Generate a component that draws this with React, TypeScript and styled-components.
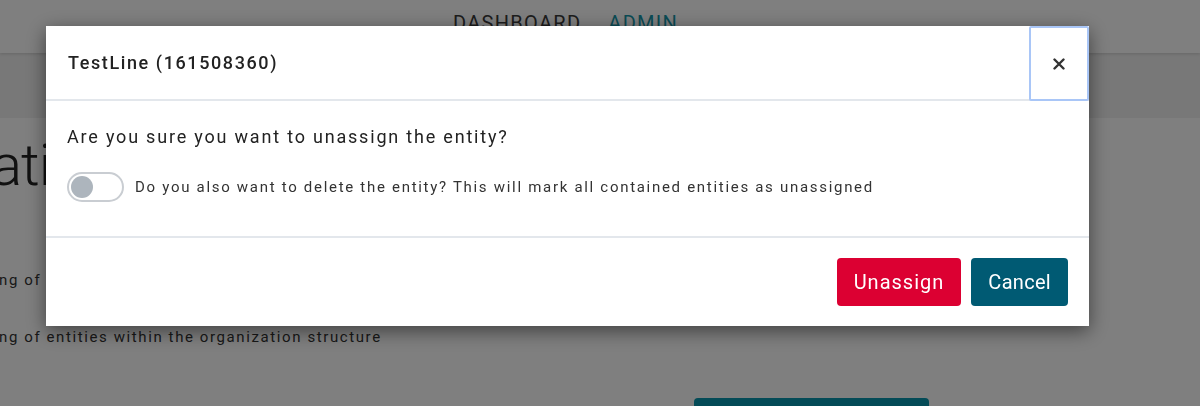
import styled, { createGlobalStyle } from "styled-components";

const GlobalStyle = createGlobalStyle`
  html, body {
    margin: 0;
    padding: 0;
    background: #fff;
    overflow: hidden;
    font-family: Roboto, "Liberation Sans", sans-serif;
  }
  * {
    box-sizing: border-box;
  }
`;

const Page = styled.div`
  width: 1200px;
  height: 406px;
  display: flex;
  flex-direction: column;
  overflow: hidden;
`;

const Header = styled.header`
  height: 53px;
  flex-shrink: 0;
  display: flex;
  align-items: center;
  padding-left: 453px;
  gap: 27px;
  background: #fff;
  box-shadow: 0 1px 3px rgba(0, 0, 0, 0.15);
  position: relative;
  z-index: 1;
`;

const NavLink = styled.a<{ $active?: boolean }>`
  font-size: 20px;
  letter-spacing: 1.3px;
  text-transform: uppercase;
  color: ${(p) => (p.$active ? "#1597aa" : "#3a3a3a")};
  text-decoration: none;
  margin-top: -7px;
`;

const SubBar = styled.div`
  height: 65px;
  flex-shrink: 0;
  background: #f0f0f0;
`;

const Content = styled.main`
  display: flex;
  flex-direction: column;
  flex-shrink: 0;
  padding-top: 18px;
`;

const PageTitle = styled.h1`
  margin: 0 0 0 -9px;
  font-size: 58px;
  font-weight: 300;
  line-height: 58px;
  letter-spacing: -1px;
  color: #222;
`;

const Description = styled.p`
  margin: 0 0 0 -1px;
  font-size: 15px;
  letter-spacing: 1.6px;
  color: #333;
  line-height: 20px;
`;

const Descriptions = styled.div`
  display: flex;
  flex-direction: column;
  gap: 37px;
  margin-top: 76px;
`;

const PrimaryButton = styled.button`
  margin: 51px 0 0 694px;
  width: 235px;
  height: 42px;
  flex-shrink: 0;
  border: none;
  border-radius: 4px;
  background: #0896ae;
`;

const Backdrop = styled.div`
  position: fixed;
  inset: 0;
  background: rgba(0, 0, 0, 0.5);
  padding: 26px 0 0 46px;
  z-index: 10;
`;

const Modal = styled.div`
  width: 1043px;
  height: 300px;
  background: #fff;
  box-shadow: 0 5px 18px rgba(0, 0, 0, 0.5);
  display: flex;
  flex-direction: column;
`;

const ModalHeader = styled.div`
  height: 75px;
  flex-shrink: 0;
  display: flex;
  align-items: stretch;
  border-bottom: 2px solid #e3e7ec;
`;

const ModalTitle = styled.h4`
  flex: 1;
  margin: 0;
  padding-left: 22px;
  display: flex;
  align-items: center;
  font-size: 18px;
  font-weight: 500;
  letter-spacing: 1.6px;
  color: #222;
`;

const CloseButton = styled.button`
  width: 60px;
  margin-bottom: -2px;
  border: 2px solid #a9c6f7;
  border-radius: 2px;
  background: #fff;
  display: flex;
  align-items: center;
  justify-content: center;
  padding: 0;
  cursor: pointer;
`;

const ModalBody = styled.div`
  height: 137px;
  flex-shrink: 0;
  padding: 24px 21px 0;
  display: flex;
  flex-direction: column;
  gap: 23px;
  border-bottom: 2px solid #e3e7ec;
`;

const Question = styled.p`
  margin: 0;
  font-size: 18px;
  line-height: 24px;
  letter-spacing: 1.8px;
  color: #222;
`;

const ToggleRow = styled.label`
  display: flex;
  align-items: center;
  gap: 11px;
  font-size: 15px;
  letter-spacing: 1.7px;
  color: #333;
`;

const Switch = styled.span<{ $on?: boolean }>`
  width: 57px;
  height: 30px;
  border: 2px solid #c9cdd2;
  border-radius: 15px;
  padding: 2px;
  display: flex;
  justify-content: ${(p) => (p.$on ? "flex-end" : "flex-start")};
  flex-shrink: 0;
  &::before {
    content: "";
    width: 22px;
    height: 22px;
    border-radius: 50%;
    background: #adb5bd;
  }
`;

const ModalFooter = styled.div`
  flex: 1;
  display: flex;
  justify-content: flex-end;
  align-items: center;
  gap: 10px;
  padding: 0 21px 1px;
`;

const ActionButton = styled.button<{ $variant: "danger" | "primary" }>`
  height: 48px;
  padding: 0 17px;
  border: none;
  border-radius: 4px;
  font-family: inherit;
  font-size: 20px;
  letter-spacing: ${(p) => (p.$variant === "danger" ? "1px" : "0.3px")};
  color: #fff;
  background: ${(p) => (p.$variant === "danger" ? "#dc0032" : "#005a73")};
  cursor: pointer;
`;

const App = () => {
  return (
    <>
      <GlobalStyle />
      <Page>
        <Header>
          <NavLink href="#">Dashboard</NavLink>
          <NavLink href="#" $active>
            Admin
          </NavLink>
        </Header>
        <SubBar />
        <Content>
          <PageTitle>ation</PageTitle>
          <Descriptions>
            <Description>ng of the organization hierarchy</Description>
            <Description>ng of entities within the organization structure</Description>
          </Descriptions>
          <PrimaryButton />
        </Content>
      </Page>
      <Backdrop>
        <Modal>
          <ModalHeader>
            <ModalTitle>TestLine (161508360)</ModalTitle>
            <CloseButton aria-label="Close">
              <svg width="12" height="12" viewBox="0 0 12 12">
                <path d="M1.5 1.5 L10.5 10.5 M10.5 1.5 L1.5 10.5" stroke="#333" strokeWidth="2.4" strokeLinecap="round" />
              </svg>
            </CloseButton>
          </ModalHeader>
          <ModalBody>
            <Question>Are you sure you want to unassign the entity?</Question>
            <ToggleRow>
              <Switch />
              Do you also want to delete the entity? This will mark all contained entities as unassigned
            </ToggleRow>
          </ModalBody>
          <ModalFooter>
            <ActionButton $variant="danger">Unassign</ActionButton>
            <ActionButton $variant="primary">Cancel</ActionButton>
          </ModalFooter>
        </Modal>
      </Backdrop>
    </>
  );
};

export default App;
